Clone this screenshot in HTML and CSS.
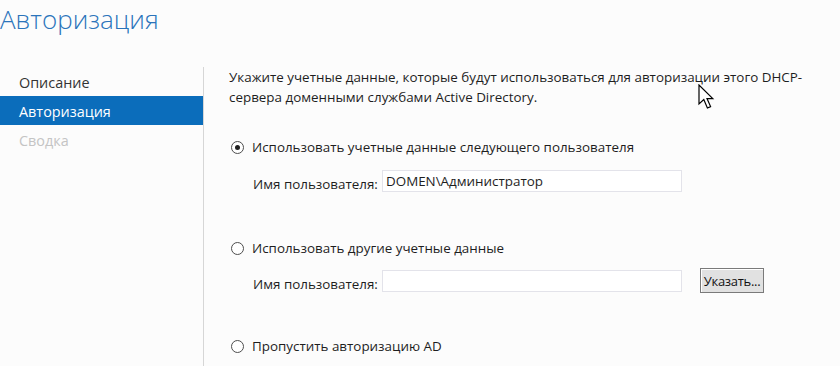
FILE: index.html
```html
<!DOCTYPE html>
<html lang="ru">
<head>
    <meta charset="UTF-8">
    <title>Авторизация</title>
    <link rel="stylesheet" href="styles.css">
</head>
<body>
    <h1 class="page-title">Авторизация</h1>

    <div class="wizard">
        <!-- Шаги мастера -->
        <ul class="steps">
            <li class="step">Описание</li>
            <li class="step step-active">Авторизация</li>
            <li class="step step-disabled">Сводка</li>
        </ul>

        <!-- Содержимое шага -->
        <div class="step-content">
            <p class="intro">Укажите учетные данные, которые будут использоваться для авторизации этого DHCP-<br>сервера доменными службами Active Directory.</p>

            <div class="option">
                <label class="radio-row">
                    <span class="radio radio-checked"></span>
                    <span>Использовать учетные данные следующего пользователя</span>
                </label>
                <div class="field-row">
                    <span class="field-label">Имя пользователя:</span>
                    <div class="text-box">DOMEN\Администратор</div>
                </div>
            </div>

            <div class="option option-second">
                <label class="radio-row">
                    <span class="radio"></span>
                    <span>Использовать другие учетные данные</span>
                </label>
                <div class="field-row field-row-btn">
                    <span class="field-label">Имя пользователя:</span>
                    <div class="text-box"></div>
                    <button class="btn-classic">Указать...</button>
                </div>
            </div>

            <div class="option option-last">
                <label class="radio-row">
                    <span class="radio"></span>
                    <span>Пропустить авторизацию AD</span>
                </label>
            </div>
        </div>
    </div>

    <!-- Указатель мыши -->
    <svg class="cursor" width="17" height="26" viewBox="0 0 17 26">
        <path d="M1 1 L1 20 L5.8 15.6 L9.4 24 L12.6 22.6 L9 14.6 L14.8 14.6 Z" fill="#fff" stroke="#000" stroke-width="1.2" stroke-linejoin="miter"/>
    </svg>
</body>
</html>
```

FILE: styles.css
```css
/* Окно мастера в стиле Server Manager */
body {
    font-family: "Open Sans", "Noto Sans", sans-serif;
    font-size: 13.4px;
    background-color: #fcfcfc;
    color: #1e1e1e;
    margin: 0;
    padding: 0;
    position: relative;
    height: 366px;
    overflow: hidden;
}

.page-title {
    margin: 0;
    padding: 0;
    font-size: 26px;
    font-weight: 300;
    line-height: 38px;
    color: #2b74bb;
    height: 67px;
}

.wizard {
    display: flex;
}

.steps {
    list-style: none;
    margin: 0;
    padding: 0;
    width: 203px;
    border-right: 1px solid #d6d6d6;
    height: 299px;
}

.step {
    height: 29px;
    line-height: 31px;
    padding-left: 19px;
    font-size: 14.4px;
    color: #333;
}

.step-active {
    background-color: #0b6dbb;
    color: #fff;
}

.step-disabled {
    color: #c4c4c4;
}

.step-content {
    padding-left: 25px;
}

.intro {
    margin: 0;
    line-height: 20px;
}

.option {
    margin-top: 30px;
}

.option-second {
    margin-top: 45px;
}

.option-last {
    margin-top: 43px;
}

.radio-row {
    display: flex;
    align-items: center;
    height: 20px;
    gap: 8px;
    padding-left: 2px;
}

.radio {
    width: 11px;
    height: 11px;
    border: 1px solid #4d4d4d;
    border-radius: 50%;
    background-color: #fff;
    box-sizing: content-box;
    position: relative;
}

.radio-checked::after {
    content: "";
    position: absolute;
    left: 3px;
    top: 3px;
    width: 5px;
    height: 5px;
    border-radius: 50%;
    background-color: #1e1e1e;
}

.field-row {
    display: flex;
    align-items: center;
    margin-top: 12px;
    padding-left: 24px;
}

.field-row-btn {
    margin-top: 10px;
}

.field-label {
    width: 129px;
    padding-top: 6px;
}

.text-box {
    width: 295px;
    height: 20px;
    line-height: 20px;
    border: 1px solid #e3e3ea;
    background-color: #fff;
    padding-left: 3px;
    box-sizing: content-box;
}

.btn-classic {
    margin-left: 18px;
    height: 25px;
    width: 64px;
    padding: 0;
    font-family: "Open Sans", sans-serif;
    font-size: 13px;
    letter-spacing: -0.3px;
    color: #111;
    background-color: #e1e1e1;
    border: 1px solid #7a7a7a;
    box-shadow: inset 1px 1px 0 #fff;
}

.cursor {
    position: absolute;
    left: 698px;
    top: 84px;
}
```
